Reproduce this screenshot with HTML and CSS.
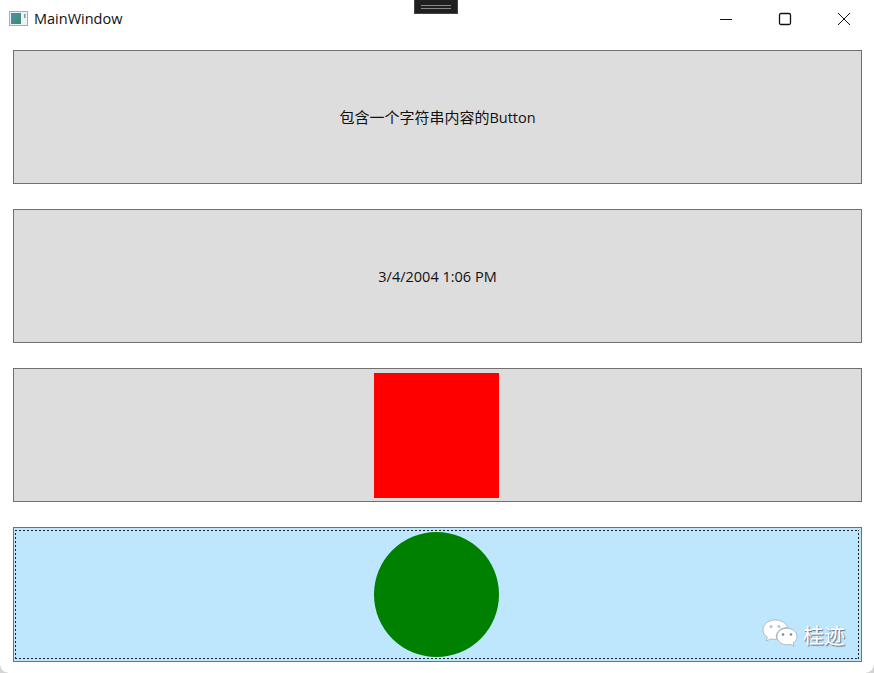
FILE: index.html
```html
<!DOCTYPE html>
<html lang="zh">
<head>
<meta charset="utf-8">
<title>MainWindow</title>
<link rel="stylesheet" href="styles.css">
</head>
<body>
<div class="window">
  <header class="titlebar">
    <div class="title-left">
      <svg class="app-icon" width="19" height="15" viewBox="0 0 19 15">
        <defs><linearGradient id="g" x1="0" y1="0" x2="1" y2="1"><stop offset="0" stop-color="#4a93b5"/><stop offset="1" stop-color="#3f8a64"/></linearGradient></defs>
        <rect x="0.5" y="0.5" width="18" height="14" fill="#eef1f3" stroke="#a4adb5"/>
        <rect x="2" y="2" width="10" height="11" fill="url(#g)"/>
        <rect x="15" y="3" width="1.500" height="4" fill="#7f9ca5"/>
      </svg>
      <span class="title-text">MainWindow</span>
    </div>
    <div class="controls">
      <svg class="ctl" width="14" height="14" viewBox="0 0 14 14"><path d="M1 7.500H13" stroke="#111" stroke-width="1" fill="none"/></svg>
      <svg class="ctl" width="14" height="14" viewBox="0 0 14 14"><rect x="1.500" y="1.500" width="11" height="11" rx="1.500" stroke="#111" stroke-width="1.300" fill="none"/></svg>
      <svg class="ctl" width="14" height="14" viewBox="0 0 14 14"><path d="M1 1L13 13M13 1L1 13" stroke="#111" stroke-width="1" fill="none"/></svg>
    </div>
  </header>
  <div class="grabber"><span class="grab-lines"></span></div>
  <main class="stack">
    <div class="btn btn-text"><span><span class="cjk">包含一个字符串内容的</span>Button</span></div>
    <div class="btn btn-text">3/4/2004 1:06 PM</div>
    <div class="btn"><div class="square"></div></div>
    <div class="btn focused"><div class="circle"></div></div>
  </main>
  <div class="watermark">
    <svg width="36" height="30" viewBox="0 0 36 30">
      <path d="M13 1C6.500 1 1 5.300 1 10.800c0 3 1.700 5.600 4.300 7.400L4.400 22l4.200-2.200c1.400.4 2.900.6 4.400.6 1 0 1.500-.1 2-.2-.4-1-.6-2-.6-3 0-5 4.700-8.600 10.400-8.600h1C24.300 4 19 1 13 1z" fill="#fff" stroke="#8f9aa3" stroke-width=".6"/>
      <path d="M35 17.500c0-4.700-4.600-8.300-10-8.300s-10 3.600-10 8.300 4.600 8.300 10 8.300c1.200 0 2.300-.2 3.400-.5l3.500 2-.9-3.300c2.400-1.600 4-3.900 4-6.500z" fill="#fff" stroke="#8f9aa3" stroke-width=".6"/>
      <circle cx="9" cy="7.500" r="1.500" fill="#b9c3ca"/><circle cx="17" cy="7.500" r="1.500" fill="#b9c3ca"/>
      <circle cx="21" cy="15.500" r="1.300" fill="#7d8891"/><circle cx="29" cy="15.500" r="1.300" fill="#7d8891"/>
    </svg>
    <span class="wm-text">桂迹</span>
  </div>
</div>
</body>
</html>
```
FILE: styles.css
```css
* { box-sizing: border-box; }
html, body { margin: 0; height: 100%; background: #fff; overflow: hidden; }
body { font-family: "Noto Sans CJK SC", "Noto Sans", sans-serif; }
.window {
  position: relative;
  width: 874px;
  height: 673px;
  background: #fff;
}
.window::before, .window::after {
  content: "";
  position: absolute;
  width: 8px;
  height: 8px;
  bottom: 0;
  pointer-events: none;
}
.window::before { left: 0; background: radial-gradient(circle at 100% 0, transparent 7px, #d4d4d4 8px); }
.window::after { right: 0; background: radial-gradient(circle at 0 0, transparent 7px, #d4d4d4 8px); }
.titlebar {
  height: 37px;
  display: flex;
  justify-content: space-between;
  align-items: center;
}
.title-left {
  display: flex;
  align-items: center;
  gap: 6px;
  padding-left: 9px;
}
.title-text {
  font-family: "Open Sans", "Liberation Sans", sans-serif;
  font-size: 14.500px;
  color: #111;
}
.controls {
  display: flex;
  gap: 45px;
  padding-right: 23px;
}
.ctl { display: block; }
.grabber {
  position: absolute;
  top: 0;
  left: 414px;
  width: 44px;
  height: 14px;
  background: #202020;
  border: 1px solid #444;
  border-top: 0;
  display: flex;
  align-items: center;
  justify-content: center;
}
.grab-lines {
  width: 30px;
  height: 4px;
  margin-top: 1px;
  border-top: 1px solid #8a8a8a;
  border-bottom: 1px solid #8a8a8a;
}
.stack {
  display: grid;
  grid-template-rows: repeat(3, 134px) 135px;
  row-gap: 25px;
  padding: 13px 12px 0 13px;
}
.btn {
  display: flex;
  align-items: center;
  justify-content: center;
  background: #dddddd;
  border: 1px solid #707070;
  color: #111;
}
.btn-text {
  font-family: "Open Sans", "Noto Sans CJK SC", sans-serif;
  font-size: 14.500px;
}
.cjk {
  font-family: "Noto Sans CJK SC", sans-serif;
  font-size: 15px;
  line-height: 1;
}
.focused {
  position: relative;
  background: #bee6fd;
  border-color: #3c7fb1;
}
.focused::after {
  content: "";
  position: absolute;
  inset: 2px 2px 2px 1px;
  background:
    repeating-linear-gradient(90deg, #222 0 2px, transparent 2px 4px) top left / 100% 1px no-repeat,
    repeating-linear-gradient(90deg, #222 0 2px, transparent 2px 4px) bottom left / 100% 1px no-repeat,
    repeating-linear-gradient(0deg, #222 0 2px, transparent 2px 4px) top left / 1px 100% no-repeat,
    repeating-linear-gradient(0deg, #222 0 2px, transparent 2px 4px) top right / 1px 100% no-repeat;
}
.square { width: 125px; height: 125px; margin-right: 2px; background: #ff0000; }
.circle { width: 125px; height: 125px; margin-right: 2px; background: #008000; border-radius: 50%; }
.watermark {
  position: absolute;
  right: 29px;
  bottom: 24px;
  display: flex;
  align-items: center;
  gap: 5px;
}
.wm-text {
  font-size: 21px;
  color: #fff;
  text-shadow: 1px 1px 1px #667;
}
```
